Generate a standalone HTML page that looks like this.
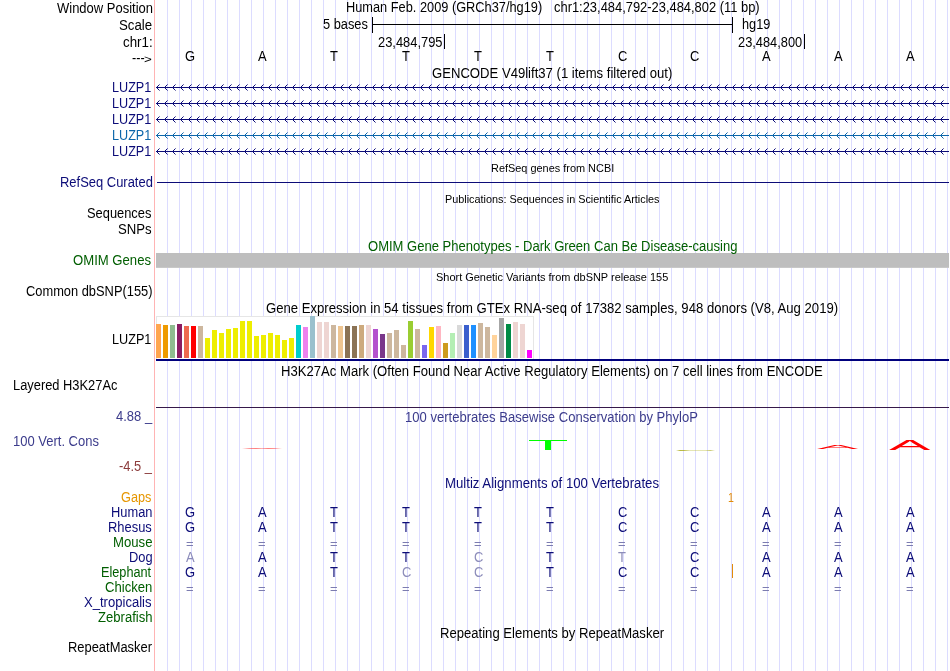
<!DOCTYPE html>
<html><head><meta charset="utf-8"><title>UCSC Genome Browser</title>
<style>
html,body{margin:0;padding:0;background:#fff}
body{width:950px;height:671px;position:relative;overflow:hidden;font-family:"Liberation Sans",Arial,Helvetica,sans-serif}
.t{position:absolute;white-space:nowrap;transform-origin:0 0;font-size:14px;line-height:16px;color:#000}
.s{font-size:11px;line-height:14px}
.m{font-size:12px;line-height:14px}
.r{position:absolute}
.lg{position:absolute;font-size:60px;line-height:60px;color:#f00;transform-origin:0 0;height:60px}
#tx{position:absolute;left:0;top:0;width:950px;height:671px;will-change:transform}
</style></head><body>
<div class="r" style="left:167px;top:0;width:783px;height:671px;background:repeating-linear-gradient(90deg,#dcdcff 0,#dcdcff 1px,transparent 1px,transparent 12px)"></div>
<div class="r" style="left:372px;top:17px;width:1px;height:16px;background:#000;"></div>
<div class="r" style="left:372px;top:24px;width:361px;height:1px;background:#000;"></div>
<div class="r" style="left:732px;top:17px;width:1px;height:16px;background:#000;"></div>
<div class="r" style="left:444px;top:34px;width:1px;height:15px;background:#000;"></div>
<div class="r" style="left:804px;top:34px;width:1px;height:15px;background:#000;"></div>
<div class="r" style="left:154px;top:0px;width:1px;height:671px;background:#ffb4b4;"></div>
<svg class="r" style="left:156px;top:83px" width="793" height="9" viewBox="0 0 793 9"><defs><pattern id="p0" width="8" height="9" patternUnits="userSpaceOnUse"><path d="M3.55 1.45 L0.5 4.5 L3.55 7.55" fill="none" stroke="#0c0c78" stroke-width="1"/></pattern></defs><rect width="790" height="9" fill="url(#p0)"/><rect y="4" width="793" height="1" fill="#0c0c78"/></svg>
<svg class="r" style="left:156px;top:99px" width="793" height="9" viewBox="0 0 793 9"><defs><pattern id="p1" width="8" height="9" patternUnits="userSpaceOnUse"><path d="M3.55 1.45 L0.5 4.5 L3.55 7.55" fill="none" stroke="#0c0c78" stroke-width="1"/></pattern></defs><rect width="790" height="9" fill="url(#p1)"/><rect y="4" width="793" height="1" fill="#0c0c78"/></svg>
<svg class="r" style="left:156px;top:115px" width="793" height="9" viewBox="0 0 793 9"><defs><pattern id="p2" width="8" height="9" patternUnits="userSpaceOnUse"><path d="M3.55 1.45 L0.5 4.5 L3.55 7.55" fill="none" stroke="#0c0c78" stroke-width="1"/></pattern></defs><rect width="790" height="9" fill="url(#p2)"/><rect y="4" width="793" height="1" fill="#0c0c78"/></svg>
<svg class="r" style="left:156px;top:131px" width="793" height="9" viewBox="0 0 793 9"><defs><pattern id="p3" width="8" height="9" patternUnits="userSpaceOnUse"><path d="M3.55 1.45 L0.5 4.5 L3.55 7.55" fill="none" stroke="#0c66aa" stroke-width="1"/></pattern></defs><rect width="790" height="9" fill="url(#p3)"/><rect y="4" width="793" height="1" fill="#0c66aa"/></svg>
<svg class="r" style="left:156px;top:147px" width="793" height="9" viewBox="0 0 793 9"><defs><pattern id="p4" width="8" height="9" patternUnits="userSpaceOnUse"><path d="M3.55 1.45 L0.5 4.5 L3.55 7.55" fill="none" stroke="#0c0c78" stroke-width="1"/></pattern></defs><rect width="790" height="9" fill="url(#p4)"/><rect y="4" width="793" height="1" fill="#0c0c78"/></svg>
<div class="r" style="left:157px;top:182px;width:792px;height:1px;background:#0c0c78;"></div>
<div class="r" style="left:156px;top:253px;width:793px;height:14px;background:#bebebe;"></div>
<div class="r" style="left:156px;top:267px;width:793px;height:1px;background:#c8c8c8;"></div>
<div class="r" style="left:156px;top:316px;width:376px;height:42px;background:#fff;border:1px solid #e6e6e6;border-bottom:none"></div>
<div class="r" style="left:156px;top:324px;width:5px;height:34px;background:#FFA54F;"></div>
<div class="r" style="left:163px;top:325px;width:5px;height:33px;background:#EE9A00;"></div>
<div class="r" style="left:170px;top:325px;width:5px;height:33px;background:#8FBC8F;"></div>
<div class="r" style="left:177px;top:324px;width:5px;height:34px;background:#8B1C62;"></div>
<div class="r" style="left:184px;top:326px;width:5px;height:32px;background:#EE6A50;"></div>
<div class="r" style="left:191px;top:326px;width:5px;height:32px;background:#FF0000;"></div>
<div class="r" style="left:198px;top:326px;width:5px;height:32px;background:#CDB79E;"></div>
<div class="r" style="left:205px;top:338px;width:5px;height:20px;background:#EEEE00;"></div>
<div class="r" style="left:212px;top:330px;width:5px;height:28px;background:#EEEE00;"></div>
<div class="r" style="left:219px;top:333px;width:5px;height:25px;background:#EEEE00;"></div>
<div class="r" style="left:226px;top:329px;width:5px;height:29px;background:#EEEE00;"></div>
<div class="r" style="left:233px;top:328px;width:5px;height:30px;background:#EEEE00;"></div>
<div class="r" style="left:240px;top:321px;width:5px;height:37px;background:#EEEE00;"></div>
<div class="r" style="left:247px;top:321px;width:5px;height:37px;background:#EEEE00;"></div>
<div class="r" style="left:254px;top:336px;width:5px;height:22px;background:#EEEE00;"></div>
<div class="r" style="left:261px;top:335px;width:5px;height:23px;background:#EEEE00;"></div>
<div class="r" style="left:268px;top:333px;width:5px;height:25px;background:#EEEE00;"></div>
<div class="r" style="left:275px;top:335px;width:5px;height:23px;background:#EEEE00;"></div>
<div class="r" style="left:282px;top:340px;width:5px;height:18px;background:#EEEE00;"></div>
<div class="r" style="left:289px;top:338px;width:5px;height:20px;background:#EEEE00;"></div>
<div class="r" style="left:296px;top:325px;width:5px;height:33px;background:#00CDCD;"></div>
<div class="r" style="left:303px;top:327px;width:5px;height:31px;background:#EE82EE;"></div>
<div class="r" style="left:310px;top:316px;width:5px;height:42px;background:#9AC0CD;"></div>
<div class="r" style="left:317px;top:322px;width:5px;height:36px;background:#EED5D2;"></div>
<div class="r" style="left:324px;top:322px;width:5px;height:36px;background:#EED5D2;"></div>
<div class="r" style="left:331px;top:325px;width:5px;height:33px;background:#CDB79E;"></div>
<div class="r" style="left:338px;top:326px;width:5px;height:32px;background:#EEC591;"></div>
<div class="r" style="left:345px;top:326px;width:5px;height:32px;background:#8B7355;"></div>
<div class="r" style="left:352px;top:326px;width:5px;height:32px;background:#8B7355;"></div>
<div class="r" style="left:359px;top:325px;width:5px;height:33px;background:#CDAA7D;"></div>
<div class="r" style="left:366px;top:325px;width:5px;height:33px;background:#EED5D2;"></div>
<div class="r" style="left:373px;top:329px;width:5px;height:29px;background:#B452CD;"></div>
<div class="r" style="left:380px;top:334px;width:5px;height:24px;background:#7A378B;"></div>
<div class="r" style="left:387px;top:333px;width:5px;height:25px;background:#CDB79E;"></div>
<div class="r" style="left:394px;top:330px;width:5px;height:28px;background:#CDB79E;"></div>
<div class="r" style="left:401px;top:345px;width:5px;height:13px;background:#CDB79E;"></div>
<div class="r" style="left:408px;top:321px;width:5px;height:37px;background:#9ACD32;"></div>
<div class="r" style="left:415px;top:329px;width:5px;height:29px;background:#CDB79E;"></div>
<div class="r" style="left:422px;top:345px;width:5px;height:13px;background:#7A67EE;"></div>
<div class="r" style="left:429px;top:327px;width:5px;height:31px;background:#FFD700;"></div>
<div class="r" style="left:436px;top:326px;width:5px;height:32px;background:#FFB6C1;"></div>
<div class="r" style="left:443px;top:343px;width:5px;height:15px;background:#CD9B1D;"></div>
<div class="r" style="left:450px;top:333px;width:5px;height:25px;background:#B4EEB4;"></div>
<div class="r" style="left:457px;top:325px;width:5px;height:33px;background:#D9D9D9;"></div>
<div class="r" style="left:464px;top:325px;width:5px;height:33px;background:#3A5FCD;"></div>
<div class="r" style="left:471px;top:325px;width:5px;height:33px;background:#1E90FF;"></div>
<div class="r" style="left:478px;top:323px;width:5px;height:35px;background:#CDB79E;"></div>
<div class="r" style="left:485px;top:327px;width:5px;height:31px;background:#CDB79E;"></div>
<div class="r" style="left:492px;top:335px;width:5px;height:23px;background:#FFD39B;"></div>
<div class="r" style="left:499px;top:318px;width:5px;height:40px;background:#A6A6A6;"></div>
<div class="r" style="left:506px;top:324px;width:5px;height:34px;background:#008B45;"></div>
<div class="r" style="left:513px;top:322px;width:5px;height:36px;background:#EED5D2;"></div>
<div class="r" style="left:520px;top:324px;width:5px;height:34px;background:#EED5D2;"></div>
<div class="r" style="left:527px;top:350px;width:5px;height:8px;background:#FF00FF;"></div>
<div class="r" style="left:156px;top:359px;width:793px;height:2px;background:#00007d;"></div>
<div class="r" style="left:156px;top:407px;width:793px;height:1px;background:#36184a;"></div>
<div class="r" style="left:242px;top:448px;width:40px;height:1px;background:transparent;background:linear-gradient(90deg,rgba(255,0,0,0),rgba(255,0,0,.4) 18%,rgba(255,0,0,.5) 35%,rgba(255,0,0,.3) 50%,rgba(255,0,0,.5) 65%,rgba(255,0,0,.4) 82%,rgba(255,0,0,0))"></div>
<div class="r" style="left:529px;top:440px;width:38px;height:1px;background:#00ff00;"></div>
<div class="r" style="left:545px;top:441px;width:6px;height:9px;background:#00ff00;"></div>
<div class="r" style="left:676px;top:450px;width:39px;height:1px;background:transparent;background:linear-gradient(90deg,rgba(160,160,0,0),rgba(160,160,0,.75) 10%,rgba(160,160,0,.7) 20%,rgba(170,170,0,.3) 35%,rgba(170,170,0,.3) 75%,rgba(160,160,0,.55) 88%,rgba(160,160,0,0))"></div>
<div class="r" style="left:732px;top:564px;width:1px;height:14px;background:#e28c0a;"></div>
<div id="tx">
<div class="lg" style="left:817.2px;top:444px;transform:scale(1.03,0.102)">A</div>
<div class="lg" style="left:889px;top:437.3px;transform:scale(1.035,0.25)">A</div>
<div class="t" style="left:56.60px;top:0px;transform:scaleX(0.9279)">Window Position</div>
<div class="t" style="left:118.89px;top:17px;transform:scaleX(0.9466)">Scale</div>
<div class="t" style="left:122.58px;top:34px;transform:scaleX(0.9517)">chr1:</div>
<div class="t" style="left:131.80px;top:50px;transform:scaleX(0.9047)">---</div>
<div class="t" style="left:143.67px;top:52.5px;transform:scale(0.9571,0.8)">&gt;</div>
<div class="t" style="left:111.61px;top:79px;color:#0c0c78;transform:scaleX(0.9019)">LUZP1</div>
<div class="t" style="left:111.61px;top:95px;color:#0c0c78;transform:scaleX(0.9019)">LUZP1</div>
<div class="t" style="left:111.61px;top:111px;color:#0c0c78;transform:scaleX(0.9019)">LUZP1</div>
<div class="t" style="left:111.61px;top:127px;color:#0c66aa;transform:scaleX(0.9019)">LUZP1</div>
<div class="t" style="left:111.61px;top:143px;color:#0c0c78;transform:scaleX(0.9019)">LUZP1</div>
<div class="t" style="left:59.59px;top:174px;color:#0c0c78;transform:scaleX(0.9248)">RefSeq Curated</div>
<div class="t" style="left:87.10px;top:205px;transform:scaleX(0.9193)">Sequences</div>
<div class="t" style="left:117.99px;top:221px;transform:scaleX(0.9395)">SNPs</div>
<div class="t" style="left:73.48px;top:252px;color:#005e00;transform:scaleX(0.9373)">OMIM Genes</div>
<div class="t" style="left:25.80px;top:283px;transform:scaleX(0.9183)">Common dbSNP(155)</div>
<div class="t" style="left:111.51px;top:331px;transform:scaleX(0.9043)">LUZP1</div>
<div class="t" style="left:12.80px;top:377px;transform:scaleX(0.9188)">Layered H3K27Ac</div>
<div class="t" style="left:116.00px;top:408px;color:#3c3c8c;transform:scaleX(0.9279)">4.88 _</div>
<div class="t" style="left:13.49px;top:433px;color:#3c3c8c;transform:scaleX(0.9277)">100 Vert. Cons</div>
<div class="t" style="left:119.20px;top:458px;color:#8c3c3c;transform:scaleX(0.9195)">-4.5 _</div>
<div class="t" style="left:121.00px;top:489px;color:#e69600;transform:scaleX(0.9083)">Gaps</div>
<div class="t" style="left:110.70px;top:504px;color:#0c0c78;transform:scaleX(0.9179)">Human</div>
<div class="t" style="left:185.14px;top:504px;color:#0c0c78;transform:scaleX(0.9250)">G</div>
<div class="t" style="left:257.85px;top:504px;color:#0c0c78;transform:scaleX(0.9250)">A</div>
<div class="t" style="left:330.45px;top:504px;color:#0c0c78;transform:scaleX(0.9250)">T</div>
<div class="t" style="left:402.45px;top:504px;color:#0c0c78;transform:scaleX(0.9250)">T</div>
<div class="t" style="left:474.45px;top:504px;color:#0c0c78;transform:scaleX(0.9250)">T</div>
<div class="t" style="left:546.45px;top:504px;color:#0c0c78;transform:scaleX(0.9250)">T</div>
<div class="t" style="left:617.64px;top:504px;color:#0c0c78;transform:scaleX(0.9250)">C</div>
<div class="t" style="left:689.64px;top:504px;color:#0c0c78;transform:scaleX(0.9250)">C</div>
<div class="t" style="left:761.85px;top:504px;color:#0c0c78;transform:scaleX(0.9250)">A</div>
<div class="t" style="left:833.85px;top:504px;color:#0c0c78;transform:scaleX(0.9250)">A</div>
<div class="t" style="left:905.85px;top:504px;color:#0c0c78;transform:scaleX(0.9250)">A</div>
<div class="t" style="left:107.89px;top:519px;color:#0c0c78;transform:scaleX(0.9230)">Rhesus</div>
<div class="t" style="left:185.14px;top:519px;color:#0c0c78;transform:scaleX(0.9250)">G</div>
<div class="t" style="left:257.85px;top:519px;color:#0c0c78;transform:scaleX(0.9250)">A</div>
<div class="t" style="left:330.45px;top:519px;color:#0c0c78;transform:scaleX(0.9250)">T</div>
<div class="t" style="left:402.45px;top:519px;color:#0c0c78;transform:scaleX(0.9250)">T</div>
<div class="t" style="left:474.45px;top:519px;color:#0c0c78;transform:scaleX(0.9250)">T</div>
<div class="t" style="left:546.45px;top:519px;color:#0c0c78;transform:scaleX(0.9250)">T</div>
<div class="t" style="left:617.64px;top:519px;color:#0c0c78;transform:scaleX(0.9250)">C</div>
<div class="t" style="left:689.64px;top:519px;color:#0c0c78;transform:scaleX(0.9250)">C</div>
<div class="t" style="left:761.85px;top:519px;color:#0c0c78;transform:scaleX(0.9250)">A</div>
<div class="t" style="left:833.85px;top:519px;color:#0c0c78;transform:scaleX(0.9250)">A</div>
<div class="t" style="left:905.85px;top:519px;color:#0c0c78;transform:scaleX(0.9250)">A</div>
<div class="t" style="left:112.67px;top:534px;color:#005e00;transform:scaleX(0.9391)">Mouse</div>
<div class="t" style="left:185.94px;top:537px;color:#7c7cb0;transform:scale(0.9286,0.85)">=</div>
<div class="t" style="left:257.94px;top:537px;color:#7c7cb0;transform:scale(0.9286,0.85)">=</div>
<div class="t" style="left:329.94px;top:537px;color:#7c7cb0;transform:scale(0.9286,0.85)">=</div>
<div class="t" style="left:401.94px;top:537px;color:#7c7cb0;transform:scale(0.9286,0.85)">=</div>
<div class="t" style="left:473.94px;top:537px;color:#7c7cb0;transform:scale(0.9286,0.85)">=</div>
<div class="t" style="left:545.94px;top:537px;color:#7c7cb0;transform:scale(0.9286,0.85)">=</div>
<div class="t" style="left:617.94px;top:537px;color:#7c7cb0;transform:scale(0.9286,0.85)">=</div>
<div class="t" style="left:689.94px;top:537px;color:#7c7cb0;transform:scale(0.9286,0.85)">=</div>
<div class="t" style="left:761.94px;top:537px;color:#7c7cb0;transform:scale(0.9286,0.85)">=</div>
<div class="t" style="left:833.94px;top:537px;color:#7c7cb0;transform:scale(0.9286,0.85)">=</div>
<div class="t" style="left:905.94px;top:537px;color:#7c7cb0;transform:scale(0.9286,0.85)">=</div>
<div class="t" style="left:128.69px;top:549px;color:#0c0c78;transform:scaleX(0.9201)">Dog</div>
<div class="t" style="left:185.85px;top:549px;color:#8c8cba;transform:scaleX(0.9250)">A</div>
<div class="t" style="left:257.85px;top:549px;color:#0c0c78;transform:scaleX(0.9250)">A</div>
<div class="t" style="left:330.45px;top:549px;color:#0c0c78;transform:scaleX(0.9250)">T</div>
<div class="t" style="left:402.45px;top:549px;color:#0c0c78;transform:scaleX(0.9250)">T</div>
<div class="t" style="left:473.64px;top:549px;color:#8c8cba;transform:scaleX(0.9250)">C</div>
<div class="t" style="left:546.45px;top:549px;color:#0c0c78;transform:scaleX(0.9250)">T</div>
<div class="t" style="left:618.45px;top:549px;color:#8c8cba;transform:scaleX(0.9250)">T</div>
<div class="t" style="left:689.64px;top:549px;color:#0c0c78;transform:scaleX(0.9250)">C</div>
<div class="t" style="left:761.85px;top:549px;color:#0c0c78;transform:scaleX(0.9250)">A</div>
<div class="t" style="left:833.85px;top:549px;color:#0c0c78;transform:scaleX(0.9250)">A</div>
<div class="t" style="left:905.85px;top:549px;color:#0c0c78;transform:scaleX(0.9250)">A</div>
<div class="t" style="left:100.91px;top:564px;color:#005e00;transform:scaleX(0.9074)">Elephant</div>
<div class="t" style="left:185.14px;top:564px;color:#0c0c78;transform:scaleX(0.9250)">G</div>
<div class="t" style="left:257.85px;top:564px;color:#0c0c78;transform:scaleX(0.9250)">A</div>
<div class="t" style="left:330.45px;top:564px;color:#0c0c78;transform:scaleX(0.9250)">T</div>
<div class="t" style="left:401.64px;top:564px;color:#8c8cba;transform:scaleX(0.9250)">C</div>
<div class="t" style="left:473.64px;top:564px;color:#8c8cba;transform:scaleX(0.9250)">C</div>
<div class="t" style="left:546.45px;top:564px;color:#0c0c78;transform:scaleX(0.9250)">T</div>
<div class="t" style="left:617.64px;top:564px;color:#0c0c78;transform:scaleX(0.9250)">C</div>
<div class="t" style="left:689.64px;top:564px;color:#0c0c78;transform:scaleX(0.9250)">C</div>
<div class="t" style="left:761.85px;top:564px;color:#0c0c78;transform:scaleX(0.9250)">A</div>
<div class="t" style="left:833.85px;top:564px;color:#0c0c78;transform:scaleX(0.9250)">A</div>
<div class="t" style="left:905.85px;top:564px;color:#0c0c78;transform:scaleX(0.9250)">A</div>
<div class="t" style="left:104.99px;top:579px;color:#005e00;transform:scaleX(0.9362)">Chicken</div>
<div class="t" style="left:185.94px;top:582px;color:#7c7cb0;transform:scale(0.9286,0.85)">=</div>
<div class="t" style="left:257.94px;top:582px;color:#7c7cb0;transform:scale(0.9286,0.85)">=</div>
<div class="t" style="left:329.94px;top:582px;color:#7c7cb0;transform:scale(0.9286,0.85)">=</div>
<div class="t" style="left:401.94px;top:582px;color:#7c7cb0;transform:scale(0.9286,0.85)">=</div>
<div class="t" style="left:473.94px;top:582px;color:#7c7cb0;transform:scale(0.9286,0.85)">=</div>
<div class="t" style="left:545.94px;top:582px;color:#7c7cb0;transform:scale(0.9286,0.85)">=</div>
<div class="t" style="left:617.94px;top:582px;color:#7c7cb0;transform:scale(0.9286,0.85)">=</div>
<div class="t" style="left:689.94px;top:582px;color:#7c7cb0;transform:scale(0.9286,0.85)">=</div>
<div class="t" style="left:761.94px;top:582px;color:#7c7cb0;transform:scale(0.9286,0.85)">=</div>
<div class="t" style="left:833.94px;top:582px;color:#7c7cb0;transform:scale(0.9286,0.85)">=</div>
<div class="t" style="left:905.94px;top:582px;color:#7c7cb0;transform:scale(0.9286,0.85)">=</div>
<div class="t" style="left:84.00px;top:594px;color:#0c0c78;transform:scaleX(0.9329)">X_tropicalis</div>
<div class="t" style="left:97.79px;top:609px;color:#005e00;transform:scaleX(0.9346)">Zebrafish</div>
<div class="t" style="left:67.69px;top:639px;transform:scaleX(0.9224)">RepeatMasker</div>
<div class="t" style="left:346.00px;top:-1px;transform:scaleX(0.9133)">Human Feb. 2009 (GRCh37/hg19)</div>
<div class="t" style="left:553.60px;top:-1px;transform:scaleX(0.9217)">chr1:23,484,792-23,484,802 (11 bp)</div>
<div class="t" style="left:323.00px;top:16px;transform:scaleX(0.9157)">5 bases</div>
<div class="t" style="left:741.70px;top:16px;transform:scaleX(0.9090)">hg19</div>
<div class="t" style="left:377.60px;top:34px;transform:scaleX(0.9209)">23,484,795</div>
<div class="t" style="left:737.70px;top:34px;transform:scaleX(0.9165)">23,484,800</div>
<div class="t" style="left:185.14px;top:48px;transform:scaleX(0.9250)">G</div>
<div class="t" style="left:257.85px;top:48px;transform:scaleX(0.9250)">A</div>
<div class="t" style="left:330.45px;top:48px;transform:scaleX(0.9250)">T</div>
<div class="t" style="left:402.45px;top:48px;transform:scaleX(0.9250)">T</div>
<div class="t" style="left:474.45px;top:48px;transform:scaleX(0.9250)">T</div>
<div class="t" style="left:546.45px;top:48px;transform:scaleX(0.9250)">T</div>
<div class="t" style="left:617.64px;top:48px;transform:scaleX(0.9250)">C</div>
<div class="t" style="left:689.64px;top:48px;transform:scaleX(0.9250)">C</div>
<div class="t" style="left:761.85px;top:48px;transform:scaleX(0.9250)">A</div>
<div class="t" style="left:833.85px;top:48px;transform:scaleX(0.9250)">A</div>
<div class="t" style="left:905.85px;top:48px;transform:scaleX(0.9250)">A</div>
<div class="t" style="left:431.99px;top:65px;transform:scaleX(0.9359)">GENCODE V49lift37 (1 items filtered out)</div>
<div class="t s" style="left:491.01px;top:161px;transform:scaleX(0.9926)">RefSeq genes from NCBI</div>
<div class="t s" style="left:445.01px;top:192px;transform:scaleX(0.9856)">Publications: Sequences in Scientific Articles</div>
<div class="t" style="left:367.79px;top:238px;color:#005e00;transform:scaleX(0.9309)">OMIM Gene Phenotypes - Dark Green Can Be Disease-causing</div>
<div class="t s" style="left:435.85px;top:270px;transform:scaleX(0.9962)">Short Genetic Variants from dbSNP release 155</div>
<div class="t" style="left:265.79px;top:300px;transform:scaleX(0.9365)">Gene Expression in 54 tissues from GTEx RNA-seq of 17382 samples, 948 donors (V8, Aug 2019)</div>
<div class="t" style="left:281.48px;top:363px;transform:scaleX(0.9357)">H3K27Ac Mark (Often Found Near Active Regulatory Elements) on 7 cell lines from ENCODE</div>
<div class="t" style="left:405.28px;top:409px;color:#3c3c8c;transform:scaleX(0.9318)">100 vertebrates Basewise Conservation by PhyloP</div>
<div class="t" style="left:444.67px;top:475px;color:#0c0c78;transform:scaleX(0.9418)">Multiz Alignments of 100 Vertebrates</div>
<div class="t" style="left:440.48px;top:625px;transform:scaleX(0.9349)">Repeating Elements by RepeatMasker</div>
<div class="t m" style="left:728.20px;top:491px;color:#e28c0a;transform:scaleX(0.8846)">1</div>
</div>
</body></html>
